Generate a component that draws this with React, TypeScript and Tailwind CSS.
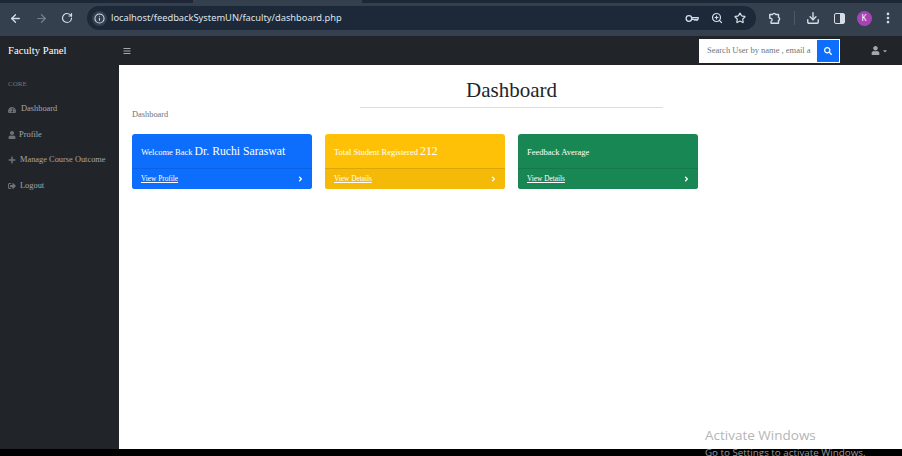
import { ArrowLeft, ArrowRight, RotateCw, Info, ZoomIn, Star, Download, EllipsisVertical } from "lucide-react";
import { FaTachometerAlt, FaUser, FaPlus, FaSignOutAlt, FaBars, FaSearch, FaAngleRight, FaCaretDown } from "react-icons/fa";

const navItems = [
    { label: "Dashboard", icon: FaTachometerAlt, gap: "gap-[5px]" },
    { label: "Profile", icon: FaUser, gap: "gap-[3px]" },
    { label: "Manage Course Outcome", icon: FaPlus, gap: "gap-[4px]" },
    { label: "Logout", icon: FaSignOutAlt, gap: "gap-[4px]" },
];

function PasswordKey() {
    return (
        <svg viewBox="0 0 16 10" className="w-[14px] h-[9px]" fill="none" stroke="currentColor" strokeWidth="1.5">
            <circle cx="4.5" cy="5" r="3.2" />
            <path d="M7.7 4h7.3v1.6l-1.3 1.4-1.2-1-1.2 1-1.2-1H7.7" />
        </svg>
    );
}

function ExtensionPuzzle() {
    return (
        <svg viewBox="0 0 16 16" className="w-[14px] h-[14px]" fill="none" stroke="currentColor" strokeWidth="1.6" strokeLinejoin="round">
            <path d="M2 4h3.2a1.9 1.9 0 0 1 3.6 0H12v3.2a1.9 1.9 0 0 1 0 3.6V14H3.5v-2.2a1.8 1.8 0 0 0 0-3.4H2z" />
        </svg>
    );
}

function BrowserBar() {
    return (
        <div className="h-[36px] shrink-0 flex flex-col font-['Noto_Sans',sans-serif] text-[#d6dde6]">
            <div className="h-[3px] shrink-0 bg-[#1d2735]">
                <div className="ml-[193px] w-[169px] h-full bg-[#35404f]" />
            </div>
            <div className="flex-1 bg-[#35404f] flex items-center pl-[9px] pb-[3px]">
                <ArrowLeft className="w-[13px] h-[13px]" strokeWidth={2.4} />
                <ArrowRight className="w-[13px] h-[13px] ml-[13px] text-[#76808d]" strokeWidth={2.2} />
                <RotateCw className="w-[12px] h-[12px] ml-[13px]" strokeWidth={2.4} />
                <div className="ml-[14px] w-[669px] h-[24px] rounded-full bg-[#1d2838] flex items-center pl-[5px] pr-[10px]">
                    <div className="w-[15px] h-[15px] rounded-full bg-[#35404f] flex items-center justify-center">
                        <Info className="w-[11px] h-[11px]" strokeWidth={2.2} />
                    </div>
                    <span className="ml-[4px] text-[9.3px] text-[#dfe4ea] flex-1">localhost/feedbackSystemUN/faculty/dashboard.php</span>
                    <PasswordKey />
                    <ZoomIn className="w-[12px] h-[12px] ml-[12px]" strokeWidth={2.4} />
                    <Star className="w-[12px] h-[12px] ml-[11px]" strokeWidth={2.4} />
                </div>
                <div className="ml-[12px]"><ExtensionPuzzle /></div>
                <div className="w-px h-[14px] bg-[#4d5866] ml-[12px]" />
                <Download className="w-[14px] h-[14px] ml-[11px]" strokeWidth={2.4} />
                <div className="w-[11px] h-[11px] ml-[13.5px] rounded-[2px] border-[1.5px] border-[#d6dde6] flex justify-end">
                    <div className="w-[4px] bg-[#d6dde6]" />
                </div>
                <div className="w-[15px] h-[15px] ml-[12px] rounded-full bg-[#a843b5] text-white text-[8px] flex items-center justify-center">K</div>
                <EllipsisVertical className="w-[14px] h-[14px] ml-[9px]" strokeWidth={2.6} />
            </div>
        </div>
    );
}

function Card({ bg, footer, link, children }: { bg: string; footer: string; link: string; children: React.ReactNode }) {
    return (
        <div className={`w-[180px] h-[55px] rounded-[3px] text-white flex flex-col overflow-hidden ${bg}`}>
            <div className="flex-1 flex items-center px-[9px] pt-[2px]">{children}</div>
            <div className={`h-[21px] shrink-0 flex items-center justify-between pl-[9px] pr-[8px] border-t border-black/10 ${footer}`}>
                <a href="#" className="text-[7.3px] underline">{link}</a>
                <FaAngleRight className="w-[7px] h-[8px]" />
            </div>
        </div>
    );
}

export default function App() {
    return (
        <div className="w-[902px] h-[456px] overflow-hidden flex flex-col font-['Liberation_Serif',serif] bg-black relative">
            <BrowserBar />

            {/* navbar */}
            <div className="h-[29px] shrink-0 bg-[#212529] flex items-center">
                <span className="w-[119px] pl-[8px] text-[10.7px] text-white">Faculty Panel</span>
                <FaBars className="ml-[4px] w-[8px] h-[8px] text-[#a5a8ab]" />
                <div className="ml-auto w-[141px] h-[24px] bg-white border border-white flex">
                    <div className="flex-1 pl-[7px] text-[8.5px] text-[#6c757d] flex items-center whitespace-nowrap overflow-hidden">Search User by name , email a</div>
                    <div className="w-[22px] bg-[#0d6efd] flex items-center justify-center">
                        <FaSearch className="w-[8px] h-[8px] text-white" />
                    </div>
                </div>
                <div className="w-[62px] pl-[31px] flex items-center text-[#a5a8ab]">
                    <FaUser className="w-[9px] h-[9px]" />
                    <FaCaretDown className="ml-[2px] w-[6px] h-[6px]" />
                </div>
            </div>

            <div className="flex h-[384px] shrink-0">
                {/* sidebar */}
                <div className="w-[119px] shrink-0 bg-[#212529] pt-[15px] pl-[8px] text-[#a3a6a9]">
                    <div className="text-[7px] text-[#72767a] leading-[9px] mb-[8px]">CORE</div>
                    <div className="flex flex-col">
                        {navItems.map((item) => (
                            <div key={item.label} className={`h-[25.4px] flex items-center whitespace-nowrap text-[8.4px] ${item.gap}`}>
                                <item.icon className="w-[8px] h-[8px] text-[#6f7276]" />
                                <span>{item.label}</span>
                            </div>
                        ))}
                    </div>
                </div>

                {/* content */}
                <div className="flex-1 bg-white px-[13px]">
                    <div className="w-[303px] ml-[228px] mt-[11px] pb-[3px] border-b border-[#dcdee0] text-center text-[21px] leading-[28px] text-[#212529]">Dashboard</div>
                    <div className="mt-[1px] text-[8.4px] leading-[12px] text-[#6c757d]">Dashboard</div>
                    <div className="mt-[13px] flex gap-[13px]">
                        <Card bg="bg-[#0d6efd]" footer="bg-[#0d6efd]" link="View Profile">
                            <span className="text-[8.5px]">Welcome Back <span className="text-[11.7px]">Dr. Ruchi Saraswat</span></span>
                        </Card>
                        <Card bg="bg-[#ffc107]" footer="bg-[#f5b907]" link="View Details">
                            <span className="text-[8.5px]">Total Student Registered <span className="text-[11.7px]">212</span></span>
                        </Card>
                        <Card bg="bg-[#198754]" footer="bg-[#198754]" link="View Details">
                            <span className="text-[8.5px]">Feedback Average</span>
                        </Card>
                    </div>
                </div>
            </div>

            {/* windows watermark */}
            <div className="absolute left-[705px] top-[428px] font-['Open_Sans',sans-serif] text-[#b5b5b5]">
                <div className="text-[13.5px] leading-[15px]">Activate Windows</div>
                <div className="text-[9.8px] leading-[12px] mt-[4px] text-[#9a9a9a] whitespace-nowrap">Go to Settings to activate Windows.</div>
            </div>
        </div>
    );
}
